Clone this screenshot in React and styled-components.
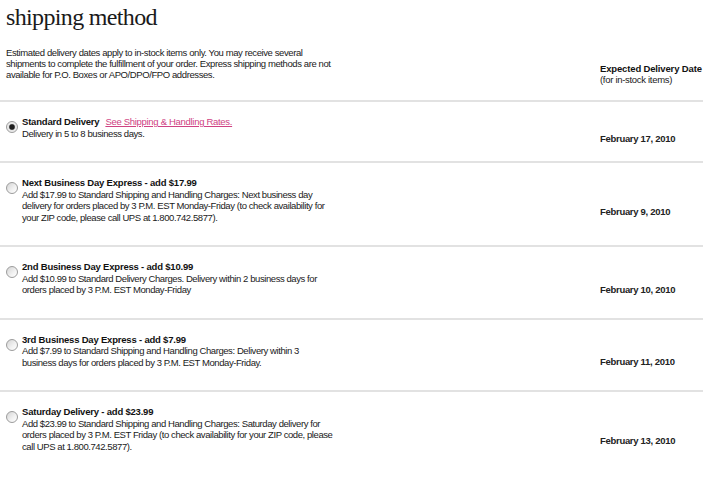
import React, { useState } from "react";
import styled, { createGlobalStyle } from "styled-components";

const GlobalStyle = createGlobalStyle`
  body {
    margin: 0;
    background: #fff;
    font-family: "Liberation Sans", Arial, sans-serif;
    color: #1a1a1a;
  }
`;

const Page = styled.div`
  width: 703px;
`;

const Title = styled.h1`
  font-family: "Liberation Serif", "Times New Roman", serif;
  font-weight: normal;
  font-size: 24px;
  line-height: 28px;
  color: #1a1a1a;
  margin: 3px 0 0 6px;
  letter-spacing: -0.65px;
`;

const Header = styled.div`
  display: grid;
  grid-template-columns: 1fr 103px;
  align-items: end;
  padding: 0 0 15px 6px;
  margin-top: 16px;
  border-bottom: 2px solid #e2e2e2;
`;

const Intro = styled.p`
  margin: 0 0 5px;
  font-size: 9.5px;
  line-height: 11px;
  letter-spacing: -0.4px;
`;

const ColHead = styled.div`
  font-size: 9.5px;
  line-height: 11px;
  letter-spacing: -0.3px;
  white-space: nowrap;

  strong {
    display: block;
    color: #111;
    letter-spacing: -0.15px;
  }
`;

const Row = styled.label`
  display: grid;
  grid-template-columns: 12px 1fr 103px;
  column-gap: 4px;
  padding-left: 6px;
  border-bottom: 2px solid #e2e2e2;
  cursor: pointer;

  &:last-child {
    border-bottom: none;
  }
`;

const Radio = styled.input`
  appearance: none;
  width: 12px;
  height: 12px;
  margin: 19px 0 0;
  border-radius: 50%;
  border: 1px solid #9c9c9c;
  background: linear-gradient(135deg, #d4d4d4 0%, #f2f2f2 60%, #ffffff 100%);
  box-sizing: border-box;
  cursor: pointer;

  &:checked {
    background: radial-gradient(circle, #1e1e1e 0 2.2px, #6f6f6f 2.8px, #e4e4e4 3.4px, #fafafa 100%);
  }
`;

const Body = styled.div`
  padding: 14px 0 22px;
  font-size: 9.5px;
  line-height: 11.5px;
  letter-spacing: -0.42px;
  white-space: nowrap;
`;

const Name = styled.span`
  font-weight: bold;
  color: #111;
  letter-spacing: -0.2px;
`;

const RateLink = styled.a`
  color: #cf4283;
  text-decoration: underline;
  margin-left: 6px;
  letter-spacing: -0.3px;
`;

const DateCell = styled.div`
  align-self: center;
  padding-top: 14px;
  font-size: 9.5px;
  line-height: 11px;
  font-weight: bold;
  letter-spacing: -0.3px;
  color: #222;
`;

const intro = [
  "Estimated delivery dates apply to in-stock items only. You may receive several",
  "shipments to complete the fulfillment of your order. Express shipping methods are not",
  "available for P.O. Boxes or APO/DPO/FPO addresses.",
];

const options = [
  {
    id: "standard",
    name: "Standard Delivery",
    link: true,
    lines: ["Delivery in 5 to 8 business days."],
    date: "February 17, 2010",
  },
  {
    id: "next",
    name: "Next Business Day Express - add $17.99",
    lines: [
      "Add $17.99 to Standard Shipping and Handling Charges: Next business day",
      "delivery for orders placed by 3 P.M. EST Monday-Friday (to check availability for",
      "your ZIP code, please call UPS at 1.800.742.5877).",
    ],
    date: "February 9, 2010",
  },
  {
    id: "second",
    name: "2nd Business Day Express - add $10.99",
    lines: [
      "Add $10.99 to Standard Delivery Charges. Delivery within 2 business days for",
      "orders placed by 3 P.M. EST Monday-Friday",
    ],
    date: "February 10, 2010",
  },
  {
    id: "third",
    name: "3rd Business Day Express - add $7.99",
    lines: [
      "Add $7.99 to Standard Shipping and Handling Charges: Delivery within 3",
      "business days for orders placed by 3 P.M. EST Monday-Friday.",
    ],
    date: "February 11, 2010",
  },
  {
    id: "saturday",
    name: "Saturday Delivery - add $23.99",
    lines: [
      "Add $23.99 to Standard Shipping and Handling Charges: Saturday delivery for",
      "orders placed by 3 P.M. EST Friday (to check availability for your ZIP code, please",
      "call UPS at 1.800.742.5877).",
    ],
    date: "February 13, 2010",
  },
];

export default function App() {
  const [selected, setSelected] = useState("standard");

  return (
    <Page>
      <GlobalStyle />
      <Title>shipping method</Title>
      <Header>
        <Intro>
          {intro.map((l, i) => (
            <React.Fragment key={i}>
              {l}
              <br />
            </React.Fragment>
          ))}
        </Intro>
        <ColHead>
          <strong>Expected Delivery Date</strong>
          (for in-stock items)
        </ColHead>
      </Header>
      {options.map(o => (
        <Row key={o.id}>
          <Radio
            type="radio"
            name="shipping"
            checked={selected === o.id}
            onChange={() => setSelected(o.id)}
          />
          <Body>
            <Name>{o.name}</Name>
            {o.link && <RateLink href="#">See Shipping &amp; Handling Rates.</RateLink>}
            {o.lines.map((l, i) => (
              <div key={i}>{l}</div>
            ))}
          </Body>
          <DateCell>{o.date}</DateCell>
        </Row>
      ))}
    </Page>
  );
}
